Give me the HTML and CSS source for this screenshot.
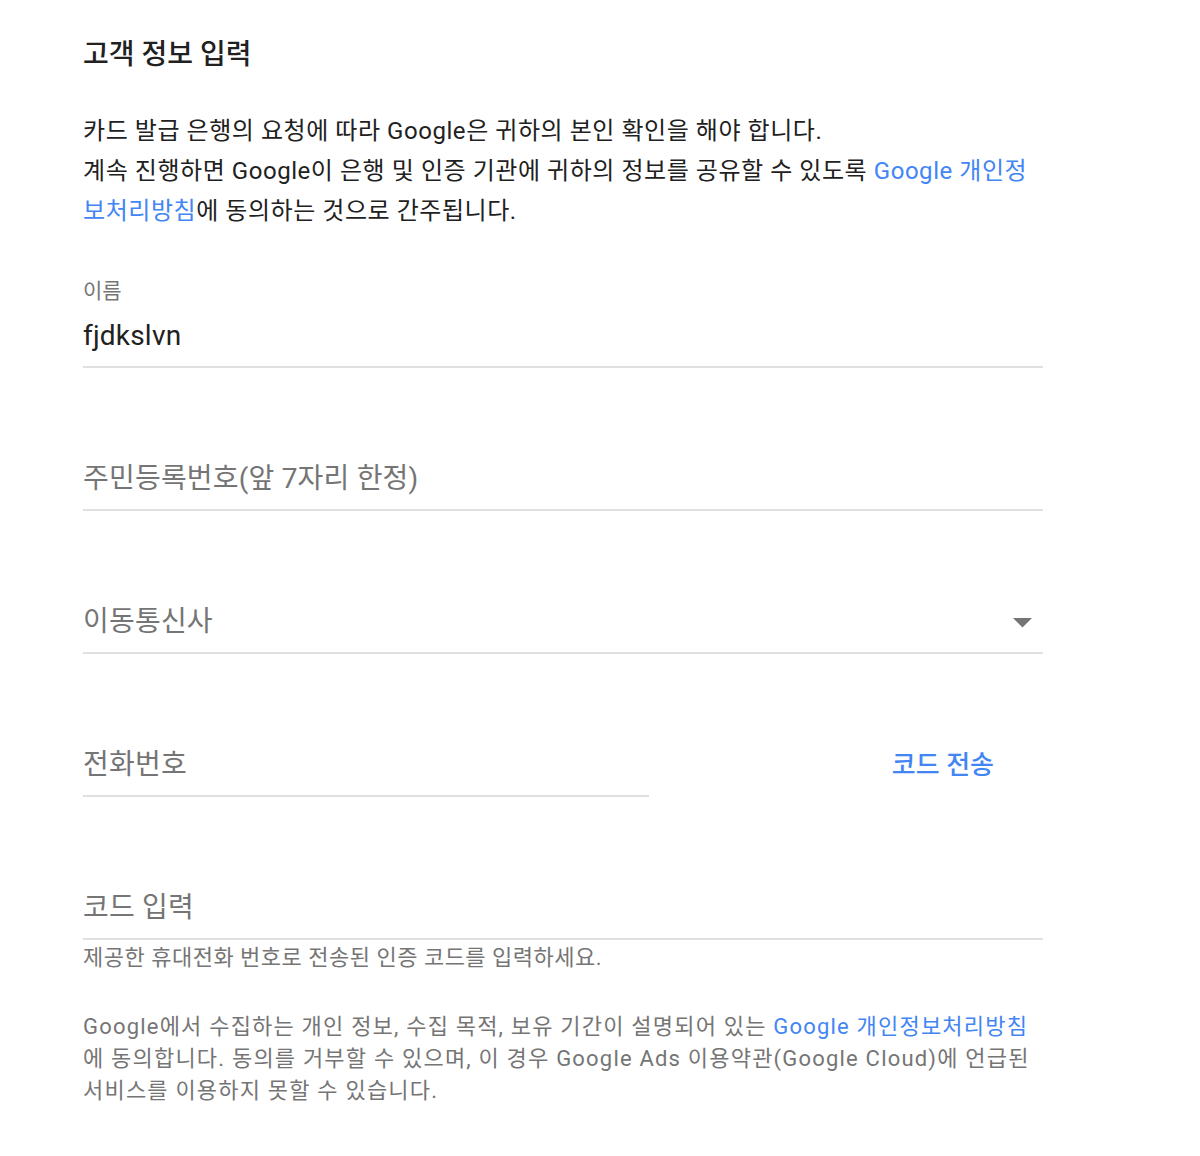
FILE: index.html
```html
<!DOCTYPE html>
<html lang="ko">
<head>
<meta charset="utf-8">
<title>고객 정보 입력</title>
<link rel="stylesheet" href="styles.css">
</head>
<body>
<main class="page">
  <h1 class="title">고객 정보 입력</h1>
  <p class="intro">카드 발급 은행의 요청에 따라 Google은 귀하의 본인 확인을 해야 합니다.<br>계속 진행하면 Google이 은행 및 인증 기관에 귀하의 정보를 공유할 수 있도록 <a class="link" href="#">Google 개인정보처리방침</a>에 동의하는 것으로 간주됩니다.</p>

  <div class="field field-first">
    <label class="field-label" for="name">이름</label>
    <input class="field-input" id="name" type="text" value="fjdkslvn">
  </div>

  <div class="field">
    <span class="field-label"></span>
    <input class="field-input" type="text" placeholder="주민등록번호(앞 7자리 한정)">
  </div>

  <div class="field">
    <span class="field-label"></span>
    <div class="field-input field-select">
      <span class="placeholder">이동통신사</span>
      <svg class="arrow" width="19" height="10" viewBox="0 0 19 10" aria-hidden="true"><path d="M0 0h19L9.5 9.5z" fill="#757575"/></svg>
    </div>
  </div>

  <div class="field-row">
    <div class="field field-phone">
      <span class="field-label"></span>
      <input class="field-input" type="tel" placeholder="전화번호">
    </div>
    <button class="send-btn" type="button">코드 전송</button>
  </div>

  <div class="field">
    <span class="field-label"></span>
    <input class="field-input" type="text" placeholder="코드 입력">
  </div>
  <p class="helper">제공한 휴대전화 번호로 전송된 인증 코드를 입력하세요.</p>

  <p class="footer">Google에서 수집하는 개인 정보, 수집 목적, 보유 기간이 설명되어 있는 <a class="link" href="#">Google 개인정보처리방침</a>에 동의합니다. 동의를 거부할 수 있으며, 이 경우 Google Ads 이용약관(Google Cloud)에 언급된 서비스를 이용하지 못할 수 있습니다.</p>
</main>
</body>
</html>
```

FILE: styles.css
```css
html, body {
  margin: 0;
  padding: 0;
  background: #ffffff;
}

body {
  font-family: Roboto, "Noto Sans CJK KR", sans-serif;
  color: #212121;
}

.page {
  width: 960px;
  padding: 37px 0 40px 83px;
}

.title {
  margin: 0;
  font-size: 28px;
  line-height: 36px;
  font-weight: 500;
  color: #212121;
}

.intro {
  margin: 38px 0 0;
  font-size: 24px;
  line-height: 40px;
  letter-spacing: 0.55px;
  color: #212121;
}

.link {
  color: #4285f4;
  text-decoration: none;
}

.field {
  display: flex;
  flex-direction: column;
  margin-top: 53px;
}

.field-first {
  margin-top: 47px;
}

.field-label {
  display: block;
  height: 24px;
  font-size: 21px;
  line-height: 26px;
  color: #757575;
}

.field-input {
  display: block;
  box-sizing: content-box;
  width: 100%;
  height: 40px;
  margin: 14px 0 0;
  padding: 0 0 10px;
  border: 0;
  border-bottom: 2px solid #e0e0e0;
  outline: none;
  background: transparent;
  font-family: Roboto, "Noto Sans CJK KR", sans-serif;
  font-size: 28px;
  line-height: 40px;
  letter-spacing: 0.2px;
  color: #212121;
}

.field-input::placeholder {
  color: #757575;
  opacity: 1;
}

.field-select {
  display: flex;
  align-items: center;
  justify-content: space-between;
}

.placeholder {
  color: #757575;
}

.arrow {
  margin-right: 11px;
  margin-top: 2px;
}

.field-row {
  display: flex;
  align-items: flex-end;
  margin-top: 53px;
}

.field-row .field {
  margin-top: 0;
}

.field-phone {
  width: 566px;
  flex: none;
}

.send-btn {
  margin: 0 49px 12px auto;
  padding: 0;
  border: 0;
  background: transparent;
  font-family: Roboto, "Noto Sans CJK KR", sans-serif;
  font-size: 26px;
  line-height: 40px;
  font-weight: 500;
  color: #4285f4;
  cursor: pointer;
}

.helper {
  margin: 6px 0 0;
  font-size: 22px;
  line-height: 24px;
  letter-spacing: 0.5px;
  color: #757575;
}

.footer {
  margin: 41px 0 0;
  font-size: 22px;
  line-height: 32px;
  letter-spacing: 1.2px;
  color: #757575;
}
```
